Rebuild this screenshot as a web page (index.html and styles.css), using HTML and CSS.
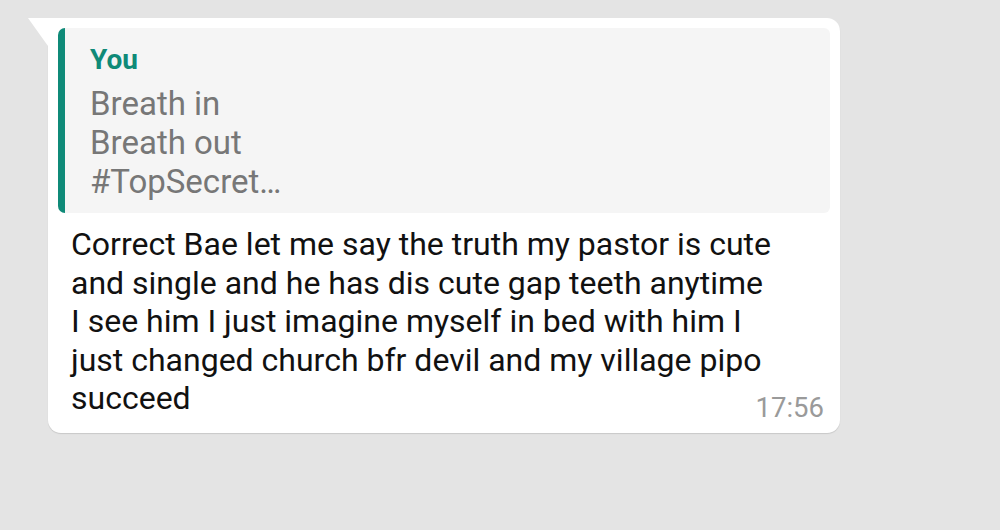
FILE: index.html
```html
<!DOCTYPE html>
<html>
<head>
<meta charset="utf-8">
<link rel="stylesheet" href="styles.css">
</head>
<body>
<div class="bubble">
  <div class="quote">
    <div class="q-author">You</div>
    <div class="q-text">Breath in<br>Breath out<br>#TopSecret…</div>
  </div>
  <div class="msg">Correct Bae let me say the truth my pastor is cute<br>and single and he has dis cute gap teeth anytime<br>I see him I just imagine myself in bed with him I<br>just changed church bfr devil and my village pipo<br>succeed<span class="time">17:56</span></div>
</div>
</body>
</html>
```
FILE: styles.css
```css
html, body {
  margin: 0;
  padding: 0;
  background: #e4e4e4;
  font-family: Roboto, "Noto Sans", sans-serif;
}
body {
  padding: 18px 0 0 48px;
  width: 1000px;
  height: 530px;
  box-sizing: border-box;
  overflow: hidden;
}
.bubble {
  position: relative;
  width: 792px;
  height: 415px;
  box-sizing: border-box;
  background: #ffffff;
  border-radius: 0 13px 13px 13px;
  padding: 10px 10px 0 10px;
  box-shadow: 0 1px 1px rgba(0,0,0,0.12);
}
.bubble::before {
  content: "";
  position: absolute;
  left: -20px;
  top: 0;
  width: 20px;
  height: 28px;
  background: #ffffff;
  clip-path: polygon(0 0, 100% 0, 100% 100%);
}
.quote {
  height: 185px;
  box-sizing: border-box;
  background: #f5f5f5;
  border-left: 7px solid #0f8a78;
  border-radius: 7px 6px 6px 7px;
  padding: 14px 0 0 25px;
}
.q-author {
  color: #0f8a78;
  font-weight: 700;
  font-size: 28px;
  line-height: 36px;
}
.q-text {
  color: #777777;
  font-size: 33px;
  line-height: 39px;
  margin-top: 6px;
}
.msg {
  color: #111111;
  font-size: 32px;
  line-height: 38.5px;
  padding: 12px 6px 0 13px;
}
.time {
  float: right;
  margin-top: 10px;
  color: #9a9a9a;
  font-size: 27.5px;
  line-height: 38.5px;
}
```
